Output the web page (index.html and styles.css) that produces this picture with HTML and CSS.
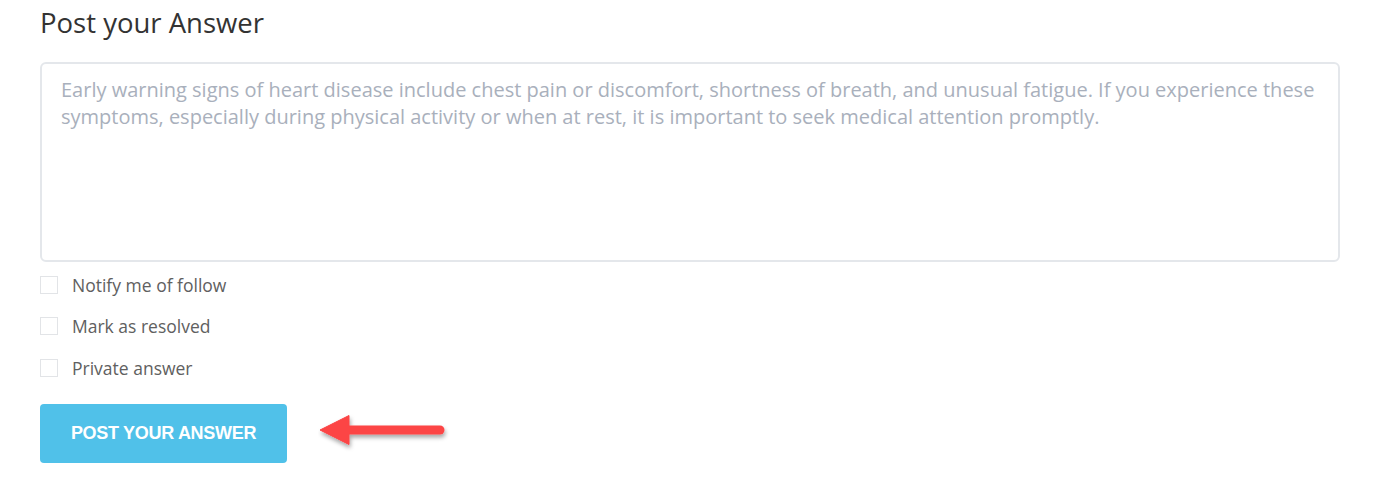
FILE: index.html
```html
<!DOCTYPE html>
<html>
<head>
<meta charset="utf-8">
<link rel="stylesheet" href="styles.css">
</head>
<body>
<div class="page">
  <h2 class="title">Post your Answer</h2>
  <div class="answer-box">
    <textarea class="answer-input" placeholder="Early warning signs of heart disease include chest pain or discomfort, shortness of breath, and unusual fatigue. If you experience these symptoms, especially during physical activity or when at rest, it is important to seek medical attention promptly."></textarea>
  </div>
  <ul class="options">
    <li class="option"><span class="check"></span><span class="label">Notify me of follow</span></li>
    <li class="option"><span class="check"></span><span class="label">Mark as resolved</span></li>
    <li class="option"><span class="check"></span><span class="label">Private answer</span></li>
  </ul>
  <div class="actions">
    <button class="submit">POST YOUR ANSWER</button>
    <svg class="arrow" width="140" height="44" viewBox="0 0 140 44">
      <defs>
        <filter id="sh" x="-20%" y="-40%" width="140%" height="180%">
          <feDropShadow dx="1" dy="3" stdDeviation="2" flood-color="#000" flood-opacity="0.35"/>
        </filter>
      </defs>
      <g filter="url(#sh)" fill="#fc4445" stroke="#fc4445">
        <line x1="28" y1="18" x2="122" y2="18" stroke-width="9" stroke-linecap="round"/>
        <polygon points="2,18 31,3.5 31,32.5" stroke-width="1" stroke-linejoin="round"/>
      </g>
    </svg>
  </div>
</div>
</body>
</html>
```
FILE: styles.css
```css
* { box-sizing: border-box; }
html, body { margin: 0; padding: 0; background: #fff; }
body { font-family: "Open Sans", "Noto Sans", sans-serif; }
.page { padding: 4px 60px 0 40px; }
.title {
  margin: 0;
  font-size: 27.5px;
  font-weight: 400;
  color: #333;
  line-height: 38px;
}
.answer-box { margin-top: 20px; }
.answer-input {
  display: block;
  width: 1300px;
  height: 200px;
  border: 2px solid #e4e7eb;
  border-radius: 6px;
  padding: 12px 19px;
  font-family: "Open Sans", "Noto Sans", sans-serif;
  font-size: 20px;
  line-height: 27px;
  color: #333;
  resize: none;
  outline: none;
}
.answer-input::placeholder { color: #a9b0bc; }
.options {
  list-style: none;
  margin: 11px 0 0;
  padding: 0;
  display: flex;
  flex-direction: column;
  gap: 18.5px;
}
.option {
  display: flex;
  align-items: center;
  height: 23px;
}
.check {
  width: 18px;
  height: 18px;
  border: 1px solid #e2e4e7;
  background: #fff;
  margin-right: 14px;
}
.label {
  font-size: 17.5px;
  color: #606060;
}
.actions {
  margin-top: 25px;
  display: flex;
  align-items: center;
}
.submit {
  width: 247px;
  height: 59px;
  border: none;
  border-radius: 4px;
  background: #50c1e9;
  color: #fff;
  font-family: "Liberation Sans", Arial, sans-serif;
  font-size: 18px;
  font-weight: 700;
  letter-spacing: -0.3px;
  padding: 0;
}
.arrow { margin-left: 31px; }
```
